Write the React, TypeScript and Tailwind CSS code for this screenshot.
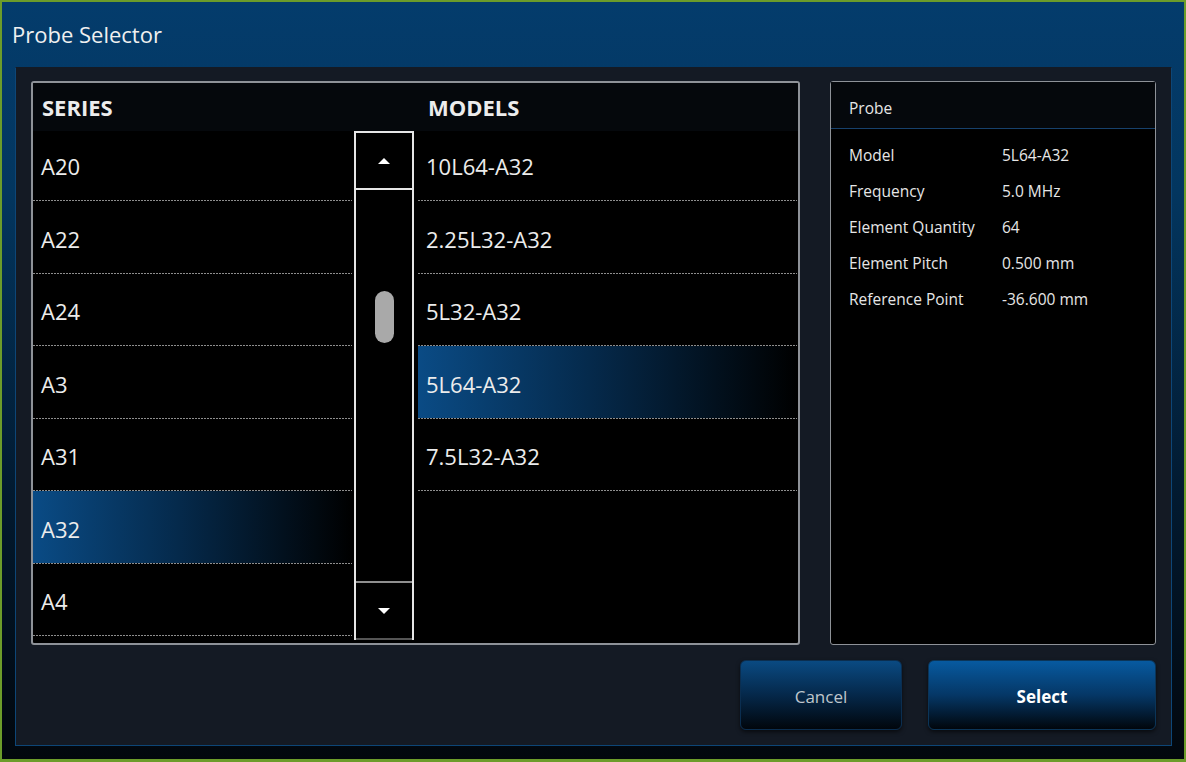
import React from "react";

const series = ["A20", "A22", "A24", "A3", "A31", "A32", "A4"];
const models = ["10L64-A32", "2.25L32-A32", "5L32-A32", "5L64-A32", "7.5L32-A32"];

const details: [string, string][] = [
  ["Model", "5L64-A32"],
  ["Frequency", "5.0 MHz"],
  ["Element Quantity", "64"],
  ["Element Pitch", "0.500 mm"],
  ["Reference Point", "-36.600 mm"],
];

// dotted line between list rows
function Dots() {
  return <div className="h-px w-full bg-[linear-gradient(to_right,#8e8e8e_66%,transparent_66%)] bg-[length:3px_1px]" />;
}

function Row({ label, selected, first }: { label: string; selected?: boolean; first?: boolean }) {
  return (
    <div>
      <div
        className={
          (first ? "h-[69px] pt-[2px] " : "h-[71.5px] pt-[5px] ") +
          "flex items-center pl-[8px] text-[22px] text-[#ececec] " +
          (selected ? "bg-[linear-gradient(to_right,#0a4b85_0%,#052a4c_45%,#000000_100%)]" : "")
        }
      >
        {label}
      </div>
      <Dots />
    </div>
  );
}

function ScrollBar() {
  return (
    <div className="w-[60px] h-[509px] flex flex-col border-x-2 border-[#e6e6e6]">
      <div className="h-[59px] border-y-2 border-[#e6e6e6] flex items-center justify-center">
        <div className="w-0 h-0 border-x-[6px] border-x-transparent border-b-[6px] border-b-white" />
      </div>
      <div className="flex-1 flex flex-col items-center pt-[101px]">
        <div className="w-[19px] h-[52px] rounded-full bg-[#a9a9a9]" />
      </div>
      <div className="h-[59px] border-t-2 border-[#8f8f8f] border-b-2 border-b-[#555] flex items-center justify-center">
        <div className="w-0 h-0 border-x-[6px] border-x-transparent border-t-[6px] border-t-white" />
      </div>
    </div>
  );
}

export default function App() {
  return (
    <div
      className="w-[1186px] h-[762px] flex flex-col border-2 border-b-[3px] border-[#6c9c2a] bg-[linear-gradient(to_bottom,#043c6c_0%,#03365f_25%,#021a30_65%,#02070d_100%)] text-[#ececec]"
      style={{ fontFamily: '"Open Sans", "Noto Sans", sans-serif' }}
    >
      {/* title bar */}
      <div className="h-[65px] flex items-center pl-[10px] text-[22px] text-[#f0f0f0]">Probe Selector</div>

      {/* main panel */}
      <div className="ml-[13px] mr-[12px] h-[679px] border border-[#0d4677] border-t-[#141a24] bg-[#141a24] flex flex-col px-[15px] pt-[13px]">
        <div className="flex gap-[30px]">
          {/* series / models list */}
          <div className="w-[769px] h-[564px] border-2 border-[#8e9298] rounded-[3px] bg-black flex flex-col overflow-hidden">
            <div className="h-[48px] shrink-0 bg-[#05080c] flex items-center text-[22px] font-bold">
              <div className="w-[385px] pl-[9px]">SERIES</div>
              <div className="pl-[10px]">MODELS</div>
            </div>
            <div className="flex">
              <div className="w-[319px]">
                {series.map((s, i) => (
                  <Row key={s} label={s} first={i === 0} selected={s === "A32"} />
                ))}
              </div>
              <div className="ml-[2px]">
                <ScrollBar />
              </div>
              <div className="w-[379px] ml-[4px]">
                {models.map((m, i) => (
                  <Row key={m} label={m} first={i === 0} selected={m === "5L64-A32"} />
                ))}
              </div>
            </div>
          </div>

          {/* probe details */}
          <div className="w-[326px] h-[564px] border border-[#8e9298] rounded-[3px] bg-black flex flex-col">
            <div className="h-[47px] bg-[#05080c] border-b border-[#17416c] flex items-center pl-[18px] pt-[7px] text-[15.5px] text-[#e6e6e6]">
              Probe
            </div>
            <div className="pt-[9px] pl-[18px] text-[15.5px] text-[#e6e6e6]">
              {details.map(([k, v]) => (
                <div key={k} className="h-[36px] flex items-center">
                  <div className="w-[153px]">{k}</div>
                  <div>{v}</div>
                </div>
              ))}
            </div>
          </div>
        </div>

        {/* buttons */}
        <div className="flex justify-end gap-[26px] mt-[15px]">
          <button className="w-[162px] h-[70px] pt-[3px] rounded-[6px] border border-[#0b2e50] bg-[linear-gradient(to_bottom,#0a4a82_0%,#05284a_50%,#01060c_100%)] text-[17px] text-[#bfc6cc] shadow-[0_2px_4px_rgba(0,0,0,0.6)]">
            Cancel
          </button>
          <button className="w-[228px] h-[70px] pt-[3px] rounded-[6px] border border-[#0b3558] bg-[linear-gradient(to_bottom,#075aa0_0%,#053766_50%,#01060c_100%)] text-[17px] font-bold text-white shadow-[0_2px_4px_rgba(0,0,0,0.6)]">
            Select
          </button>
        </div>
      </div>
    </div>
  );
}
